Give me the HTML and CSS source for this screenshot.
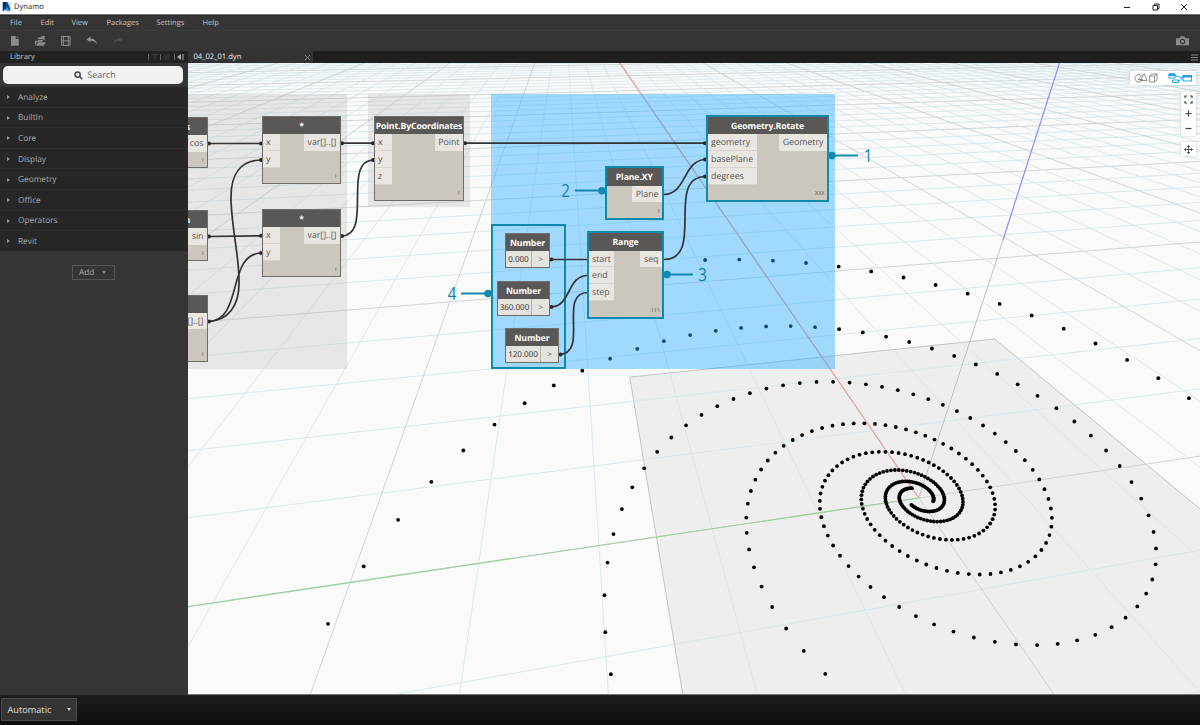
FILE: index.html
```html
<!DOCTYPE html>
<html lang="en">
<head>
<meta charset="utf-8">
<title>Dynamo</title>
<link rel="stylesheet" href="styles.css">
</head>
<body>
<div class="app">
  <header class="titlebar">
    <svg class="logo" viewBox="0 0 10 11"><rect width="10" height="11" fill="#d5e4f2"/><path d="M1 0H6L9 7V10L5 8L1 10Z" fill="#0b4f9e"/><path d="M1 0H4V5L1 9Z" fill="#082b57"/><path d="M5 5L9 10H5Z" fill="#3e9be0"/></svg>
    <span class="app-name">Dynamo</span>
    <div class="window-buttons">
      <svg viewBox="0 0 8 8"><path d="M1 4.5H7"/></svg>
      <svg viewBox="0 0 8 8"><path d="M1 2.5H5.5V7H1ZM2.5 2.500V1H7V5.500H5.500"/></svg>
      <svg viewBox="0 0 8 8"><path d="M1 1L7 7M7 1L1 7"/></svg>
    </div>
  </header>
  <nav class="menubar">
    <span class="m-file">File</span><span class="m-edit">Edit</span><span class="m-view">View</span><span class="m-packages">Packages</span><span class="m-settings">Settings</span><span>Help</span>
  </nav>
  <div class="toolbar">
    <svg viewBox="0 0 12 12"><path d="M2 1H7V4H10V11H2ZM8 1L10 3H8Z" fill="#8b8b8b"/></svg>
    <svg viewBox="0 0 12 12"><path d="M0 11V6H3L4 5H8.500L7.500 7H2ZM3 7.500H11L9 11H1ZM3 2.500H6L7 1H10V5H9L8 4H3Z" fill="#8b8b8b"/></svg>
    <svg viewBox="0 0 12 12"><path d="M1.700 1.500H10.300V10.700H1.700ZM1.700 6H10.300M3.500 1.500V6M8.500 1.500V6M3.500 6V10.700M8.500 6V10.700" fill="none" stroke="#8f8f8f" stroke-width="1"/></svg>
    <svg viewBox="0 0 12 12"><path d="M.5 4.500L4.500 1.500V3.500C8 3.500 10.500 5.500 11.500 9.500C9.500 6.500 7.500 5.800 4.500 5.800V7.500Z" fill="#929292"/></svg>
    <svg viewBox="0 0 12 12"><path d="M11.500 4.500L7.500 1.500V3.500C4 3.500 1.500 5.500 .5 9.500C2.500 6.500 4.500 5.800 7.500 5.800V7.500Z" fill="#4b4b4b"/></svg>
    <svg class="camera" viewBox="0 0 14 10"><path d="M0 2H4L5 0H9L10 2H14V9.500H0Z" fill="#8b8b8b"/><circle cx="7" cy="5.500" r="2.300" fill="#8b8b8b" stroke="#333" stroke-width="1.200"/></svg>
  </div>
  <div class="main">
    <aside class="library">
      <div class="library-head"><span>Library</span>
        <svg viewBox="0 0 38 8"><path d="M1.500 1V7M13.500 1V7M27.500 1V7" stroke="#666"/><path d="M5 1.500H11M8 1.500V7M17 2H23M17 4H23M17 6H23" stroke="#3c3c3c"/><path d="M34 1V7L30 4Z" fill="#aaa"/><path d="M36 1V7" stroke="#aaa"/></svg>
      </div>
      <div class="search"><svg viewBox="0 0 9 9"><circle cx="3.600" cy="3.600" r="2.600"/><path d="M5.500 5.500L8.300 8.300"/></svg>Search</div>
      <ul class="tree">
        <li>Analyze</li><li>BuiltIn</li><li>Core</li><li>Display</li><li>Geometry</li><li>Office</li><li>Operators</li><li>Revit</li>
      </ul>
      <div class="add">Add<i></i></div>
    </aside>
    <section class="workspace">
      <div class="tabs">
        <div class="tab">04_02_01.dyn<svg viewBox="0 0 7 7"><path d="M1 1L6 6M6 1L1 6"/></svg></div>
        <svg class="burger" viewBox="0 0 7 7"><path d="M0 1H7M0 3.500H7M0 6H7"/></svg>
      </div>
      <div class="canvas">
        <svg id="scene" class="scene" viewBox="188 63 1012 631"></svg>
        <div class="layer">
          <div class="group g-gray g1"></div>
          <div class="group g-gray g2"></div>
          <div class="group g-blue"></div>
          <div class="frame"></div>
        </div>
        <svg id="wires" class="scene" viewBox="188 63 1012 631"></svg>
        <div class="layer" id="nodes">
          <div class="node n-cos"><h3>Math.Cos</h3><div class="ports"><b>cos</b></div><em>I</em></div>
          <div class="node n-sin"><h3>Math.Sin</h3><div class="ports"><b>sin</b></div><em>I</em></div>
          <div class="node n-mul0"><h3></h3><div class="ports"><b>var[]..[]</b></div><em>I</em></div>
          <div class="node n-mul1"><h3>*</h3><div class="ports"><p><span>x</span><span>y</span></p><b>var[]..[]</b></div><em>I</em></div>
          <div class="node n-mul2"><h3>*</h3><div class="ports"><p><span>x</span><span>y</span></p><b>var[]..[]</b></div><em>I</em></div>
          <div class="node n-point"><h3>Point.ByCoordinates</h3><div class="ports"><p><span>x</span><span>y</span><span>z</span></p><b>Point</b></div><em>I</em></div>
          <div class="node hot n-rotate"><h3>Geometry.Rotate</h3><div class="ports"><p><span>geometry</span><span>basePlane</span><span>degrees</span></p><b>Geometry</b></div><em>XXX</em></div>
          <div class="node hot n-plane"><h3>Plane.XY</h3><div class="ports"><b>Plane</b></div><em>I</em></div>
          <div class="node hot n-range"><h3>Range</h3><div class="ports"><p><span>start</span><span>end</span><span>step</span></p><b>seq</b></div><em>I I \</em></div>
          <div class="node num n-num1"><h3>Number</h3><div class="value"><span>0.000</span><b>&gt;</b></div></div>
          <div class="node num n-num2"><h3>Number</h3><div class="value"><span>360.000</span><b>&gt;</b></div></div>
          <div class="node num n-num3"><h3>Number</h3><div class="value"><span>120.000</span><b>&gt;</b></div></div>
        </div>
        <svg class="scene callouts" viewBox="188 63 1012 631">
          <path d="M832 155.500H858M602 190.500H575M667 274.500H693M488 293.500H461"/>
          <circle cx="832" cy="155.500" r="3.800"/><circle cx="602" cy="190.800" r="3.800"/><circle cx="667" cy="274.500" r="3.800"/><circle cx="488" cy="293.500" r="3.800"/>
          <text transform="translate(868 161.500) scale(.84 1)">1</text>
          <text transform="translate(565.500 197) scale(.84 1)">2</text>
          <text transform="translate(702.500 280.500) scale(.84 1)">3</text>
          <text transform="translate(452 299.500) scale(.84 1)">4</text>
        </svg>
        <div class="view-switch">
          <svg class="shapes" viewBox="0 0 24 12"><path d="M7.500 3.600A3.800 3.800 0 1 0 8.500 7.500L4 7.500L8 3.500M6 9L10.200 1.500L13 8.500H7M15.500 4H20.500V10H15.500ZM15.500 4L18 2H23L20.500 4M23 2V8L20.500 10"/></svg>
          <svg class="graph" viewBox="0 0 24 12"><path d="M1 2H7V6H1ZM4.500 8H10.500V10.500H4.500ZM15 3.500H23.500V9H15ZM7 4C11 4 12 6 15 6M10.500 9C13 9 13 6 15 6"/><path d="M1 2H7V3.500H1ZM15 3.500H23.500V5H15Z" class="fill"/></svg>
        </div>
        <div class="zoom-tools">
          <svg viewBox="0 0 9 9"><path d="M1 3V1H3M6 1H8V3M8 6V8H6M3 8H1V6"/></svg>
          <svg viewBox="0 0 9 9"><path d="M1.500 4.500H7.500M4.500 1.500V7.500"/></svg>
          <svg viewBox="0 0 9 9"><path d="M1.500 4.500H7.500"/></svg>
        </div>
        <div class="pan-tool"><svg viewBox="0 0 9 9"><path d="M.5 4.500H8.500M4.500 .5V8.500M3 2L4.500 .5L6 2M3 7L4.500 8.500L6 7M2 3L.5 4.500L2 6M7 3L8.500 4.500L7 6"/></svg></div>
      </div>
    </section>
  </div>
  <footer class="statusbar"><div class="run-mode">Automatic<i></i></div></footer>
</div>
<script src="scene.js"></script>
</body>
</html>
```
FILE: styles.css
```css
* { box-sizing: border-box; }
body { margin: 0; font-family: "Open Sans", "Noto Sans", sans-serif; text-rendering: geometricPrecision; }
.app { width: 1200px; height: 725px; display: flex; flex-direction: column; background: #353535; overflow: hidden; }
svg { display: block; flex: none; }

.titlebar { height: 15px; flex: none; background: #fff; border-bottom: 1px solid #777; display: flex; align-items: center; padding-left: 2px; }
.logo { width: 9px; height: 10px; }
.app-name { font-size: 7.600px; color: #222; margin-left: 3px; line-height: 15px; }
.window-buttons { margin-left: auto; display: flex; gap: 20.500px; padding-right: 12px; }
.window-buttons svg { width: 8px; height: 8px; fill: none; stroke: #222; stroke-width: 1; }

.menubar { height: 16px; flex: none; display: flex; background: #353535; color: #c4c4c4; font-size: 7.500px; line-height: 14px; padding-left: 10px; border-bottom: 1px solid #3d3d3d; border-top: 1px solid #292929; }
.m-file { width: 30.500px; }
.m-edit { width: 31px; }
.m-view { width: 35px; }
.m-packages { width: 50px; }
.m-settings { width: 46px; }

.toolbar { height: 20px; flex: none; display: flex; align-items: center; gap: 14px; padding: 0 11px 0 9px; background: #353535; }
.toolbar svg { width: 11.700px; height: 11.700px; }
.toolbar .camera { width: 13px; height: 10px; margin-left: auto; }

.main { height: 644px; flex: none; display: flex; }
.library { width: 188px; flex: none; display: flex; flex-direction: column; background: #353535; }
.library-head { height: 12px; background: #222; color: #c8c8c8; font-size: 7.600px; line-height: 13px; padding: 0 3px 0 10px; display: flex; align-items: center; justify-content: space-between; }
.library-head span { padding-top: 1px; }
.library-head svg { width: 38px; height: 8px; }
.search { height: 18px; margin: 3px 5px 3px 3px; border-radius: 5px; background: #f1f1f1; color: #666; font-size: 9px; line-height: 18px; display: flex; align-items: center; justify-content: center; gap: 4px; padding-left: 4px; }
.search svg { width: 9px; height: 9px; fill: none; stroke: #444; stroke-width: 1.500; }
.tree { list-style: none; margin: 0; padding: 0; background: #272727; }
.tree li { height: 20.600px; display: flex; align-items: center; gap: 8px; padding: 1px 0 0 7px; color: #aaa; font-size: 8.300px; border-bottom: 1px solid #2e2e2e; }
.tree li::before { content: ""; border-left: 3px solid #999; border-top: 2px solid transparent; border-bottom: 2px solid transparent; }
.add { width: 43px; height: 15px; margin: 13px 0 0 72px; border: 1px solid #555; color: #aaa; font-size: 8.300px; display: flex; align-items: center; gap: 8px; padding-left: 6px; }
.add i, .run-mode i { border-top: 3px solid #888; border-left: 2px solid transparent; border-right: 2px solid transparent; }

.workspace { width: 1012px; display: flex; flex-direction: column; }
.tabs { height: 12px; flex: none; background: #1f1f1f; display: flex; justify-content: space-between; align-items: center; padding-right: 2px; }
.tab { width: 125px; height: 12px; background: #333; color: #eee; font-size: 7.600px; line-height: 12px; font-weight: 500; padding: 0 2px 0 5.500px; display: flex; align-items: center; justify-content: space-between; }
.tab svg, .burger { width: 7px; height: 7px; fill: none; stroke: #8a8a8a; }

.canvas { position: relative; height: 632px; background: #fafafa; overflow: hidden; border-bottom: 1px solid #777; }
.scene { position: absolute; left: 0; top: 0; width: 1012px; height: 631px; }
.layer { position: absolute; left: -188px; top: -63px; width: 1200px; height: 725px; }
.group, .frame, .node { position: absolute; }
.g-gray { background: rgba(180, 180, 180, .28); }
.g1 { left: 150px; top: 94px; width: 197px; height: 275px; }
.g2 { left: 368px; top: 94px; width: 102px; height: 113px; }
.g-blue { left: 491px; top: 94px; width: 344px; height: 275px; background: rgba(36, 171, 255, .42); }
.frame { left: 491px; top: 224px; width: 75px; height: 144.500px; border: 2px solid #1089ad; }

.node { background: #cbc6be; border: 1px solid #6f6d6a; }
.node h3 { margin: 0; height: 17px; background: #5a5856; color: #fff; font-size: 8.700px; line-height: 18px; font-weight: 700; letter-spacing: -.12px; text-align: center; white-space: nowrap; }
.ports { display: flex; justify-content: space-between; color: #555; font-size: 8.800px; line-height: 17px; }
.ports p { margin: 0; display: flex; flex-direction: column; }
.ports p span { height: 16.900px; background: #e9e6e2; padding: 0 3.500px 0 3px; border-bottom: 1px solid #d6d2cc; min-width: 17px; }
.ports b { margin-left: auto; font-weight: 400; height: 16.500px; background: #e9e6e2; padding: 0 3.500px; white-space: nowrap; }
.node em { position: absolute; right: 3.500px; bottom: 3px; font-style: normal; font-size: 5.500px; line-height: 7px; color: #555; }
.hot { border: 2px solid #1089ad; }
.hot em { right: 2.500px; bottom: 3px; }
.node.n-cos h3, .node.n-sin h3 { text-align: right; padding-right: 17px; }
.n-cos { left: 137px; top: 117px; width: 71px; height: 51px; }
.n-sin { left: 137px; top: 210px; width: 71px; height: 51px; }
.n-mul0 { left: 130px; top: 294.500px; width: 78px; height: 67.500px; }
.n-mul1 { left: 262px; top: 116px; width: 79px; height: 68px; }
.n-mul2 { left: 262px; top: 209px; width: 79px; height: 68px; }
.n-point { left: 374px; top: 116px; width: 90px; height: 85px; }
.n-rotate { left: 706px; top: 115px; width: 123px; height: 87px; }
.n-plane { left: 604.500px; top: 166px; width: 59.500px; height: 54px; }
.n-plane h3, .n-range h3 { height: 17.500px; line-height: 19px; }
.n-range { left: 587px; top: 231px; width: 77px; height: 88px; }
.n-num1 { left: 505px; top: 233px; width: 45px; height: 35px; }
.n-num2 { left: 497px; top: 280.500px; width: 53px; height: 35px; }
.n-num3 { left: 505px; top: 328px; width: 54px; height: 35px; }
.value { height: 16px; display: flex; background: #e6e2dd; color: #2c2c2c; font-size: 8px; line-height: 17px; }
.value span { flex: 1; text-align: center; border-right: 1px solid #b5b1ab; }
.value b { width: 17px; font-weight: 400; text-align: center; color: #555; }

.callouts path { stroke: #1089ad; stroke-width: 1.800; fill: none; }
.callouts circle { fill: #1089ad; }
.callouts text { fill: #1083a8; font-size: 18px; text-anchor: middle; }

.view-switch, .zoom-tools, .pan-tool { position: absolute; background: #fff; box-shadow: 0 0 2px rgba(0, 0, 0, .2); display: flex; }
.view-switch { left: 942px; top: 8px; width: 66px; height: 14px; align-items: center; justify-content: space-between; padding: 0 4px; }
.view-switch svg { width: 24px; height: 12px; fill: none; stroke: #777; stroke-width: .8; }
.view-switch .graph { stroke: #24a0ef; stroke-width: 1; }
.view-switch .graph .fill { fill: #24a0ef; }
.zoom-tools { left: 993px; top: 29px; width: 15px; height: 44px; flex-direction: column; align-items: center; justify-content: space-around; }
.pan-tool { left: 993px; top: 79px; width: 15px; height: 14px; align-items: center; justify-content: center; }
.zoom-tools svg, .pan-tool svg { width: 9px; height: 9px; fill: none; stroke: #444; stroke-width: 1.200; }
.pan-tool svg { stroke-width: .9; }

.statusbar { height: 30px; flex: none; background: linear-gradient(#1d1d1d, #0d0d0d); padding: 3px 0 0 1px; }
.run-mode { width: 76px; height: 23px; background: #343434; border: 1px solid #4c4c4c; color: #ddd; font-size: 9.200px; display: flex; align-items: center; justify-content: space-between; padding: 0 5px 0 5.500px; }
.run-mode i { border-top-color: #ccc; }
```
FILE: scene.js
```js
// Ground plane in perspective: u runs along the green axis, v along the red one.
const ORIGIN = [918.8, 498];
const VP_U = [4300, -6];
const VP_V = [563.6, -18];
const GU = 0.0288;
const GV = 0.1503;

function project(u, v) {
  const a = u * GU, b = v * GV, w = 1 + a + b;
  return [(ORIGIN[0] + a * VP_U[0] + b * VP_V[0]) / w, (ORIGIN[1] + a * VP_U[1] + b * VP_V[1]) / w];
}
const f = (p) => p[0].toFixed(1) + ' ' + p[1].toFixed(1);
const seg = (p, q, color, width) => `<path d="M${f(p)}L${f(q)}" stroke="${color}" stroke-width="${width}" fill="none"/>`;

let out = '';
const S = 2.5;
out += `<path d="M${f(project(-S, -S))}L${f(project(-S, S))}L${f(project(S, S))}L${f(project(S, -S))}Z" fill="#eeeeee" stroke="#c4c4c4" stroke-width="1"/>`;

const NEAR = 0.06;
const MINOR = '#d3e4ec', MAJOR = '#c4cdd1';
for (let v = -5; v <= 45; v++) {
  const u0 = Math.max(-100, (NEAR - 1 - v * GV) / GU);
  out += seg(project(u0, v), project(100, v), v % 5 ? MINOR : MAJOR, 0.8);
}
for (let u = -100; u <= 100; u++) {
  const v0 = Math.max(-40, (NEAR - 1 - u * GU) / GV);
  if (v0 < 45) out += seg(project(u, v0), project(u, 45), u % 5 ? MINOR : MAJOR, 0.8);
}

out += seg([188, 606.5], ORIGIN, '#9dd09d', 1.2);
out += seg([620, 63], ORIGIN, '#f29a9a', 1.2);
out += seg([1059.5, 63], [1003, 240], '#8f8ff0', 1.2);
out += seg([1003, 240], ORIGIN, '#c0c0c0', 1);

// Three logarithmic arms rotated by 120 degrees.
for (const start of [-30, 90, 210]) {
  for (let i = 0; i <= 148; i++) {
    const t = i * 0.1;
    const r = 0.1292 * Math.exp(0.2584 * t);
    const ang = (start + 0.4) * Math.PI / 180 + t;
    const u = r * Math.cos(ang), v = r * Math.sin(ang);
    if (1 + u * GU + v * GV < 0.1) continue;
    const [x, y] = project(u, v);
    if (x < 188 || x > 1200 || y > 694) continue;
    out += `<circle cx="${x.toFixed(1)}" cy="${y.toFixed(1)}" r="1.9" fill="#000"/>`;
  }
}
document.getElementById('scene').innerHTML = out;

const wires = [
  'M208 143.500H262', 'M208 236.500L262 235.800',
  'M208 321.500C228 321 240 306 239 280C239 255 231 225 231 197C231 175 240 160 262 160',
  'M208 321.500C244 321 226 253 262 253',
  'M341 143.200H374', 'M341 236C374 236 341 160 374 160', 'M464 143.200H706',
  'M664 194.500C687 194 683 159.500 706 159.500', 'M664 259.500C706 259 664 176.500 706 176.500',
  'M550 259.500H588', 'M550 307C572 307 566 275.500 588 275.500', 'M559 354.500C590 354 557 292.500 588 292.500'
];
const ends = [[209, 143.5], [261, 143.5], [209, 236.5], [261, 235.8], [209, 321.5], [261, 160], [261, 253],
  [342, 143.2], [373, 143.2], [342, 236], [373, 160], [465, 143.2], [705, 143.2], [705, 159.5], [705, 176.5],
  [551.5, 259.5], [551.5, 307], [560.5, 354.5]];
document.getElementById('wires').innerHTML =
  wires.map((d) => `<path d="${d}" fill="none" stroke="#333" stroke-width="1.700"/>`).join('') +
  ends.map(([x, y]) => `<circle cx="${x}" cy="${y}" r="2" fill="#2a2a2a"/>`).join('');
```
